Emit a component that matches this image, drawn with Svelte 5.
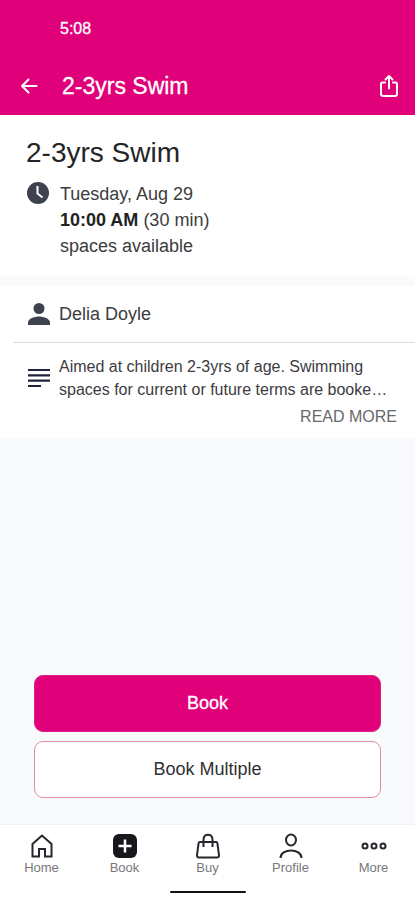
<script lang="ts">
  const session = {
    name: '2-3yrs Swim',
    date: 'Tuesday, Aug 29',
    time: '10:00 AM',
    duration: '(30 min)',
    availability: 'spaces available',
    coach: 'Delia Doyle',
    summary: 'Aimed at children 2-3yrs of age. Swimming spaces for current or future terms are booke…'
  };

  const tabs = [
    { id: 'home', label: 'Home' },
    { id: 'book', label: 'Book' },
    { id: 'buy', label: 'Buy' },
    { id: 'profile', label: 'Profile' },
    { id: 'more', label: 'More' }
  ];

  let activeTab = $state('book');
</script>

<div class="app">
  <header class="header">
    <div class="status-bar">5:08</div>
    <div class="toolbar">
      <button aria-label="Back">
        <svg class="back-icon" width="18" height="18" viewBox="0 0 18 18">
          <path d="M16.5 9H2M8.5 2.5L2 9l6.5 6.5" />
        </svg>
      </button>
      <h1 class="toolbar-title">{session.name}</h1>
      <button aria-label="Share">
        <svg class="share-icon" width="20" height="24" viewBox="0 0 20 24">
          <path d="M6 8.5H3.5Q2 8.5 2 10v10q0 2 2 2h12q2 0 2-2V10q0-1.5-1.5-1.5H14" />
          <path d="M10 14.500V2.500M6.500 5.500L10 2l3.500 3.500" />
        </svg>
      </button>
    </div>
  </header>

  <main class="content">
    <section class="card summary">
      <h2 class="session-title">{session.name}</h2>
      <div class="when">
        <svg class="row-icon" width="24" height="24" viewBox="0 0 24 24">
          <circle cx="12" cy="12" r="11" fill="#3e424f" />
          <path d="M11.5 5v7.500l5 4" fill="none" stroke="#fff" stroke-width="2" />
        </svg>
        <div class="when-text">
          <div>{session.date}</div>
          <div><strong>{session.time}</strong> {session.duration}</div>
          <div>{session.availability}</div>
        </div>
      </div>
    </section>

    <section class="card details">
      <div class="coach">
        <svg class="row-icon" width="24" height="24" viewBox="0 0 24 24">
          <circle cx="12" cy="6.5" r="5.500" fill="#3e424f" />
          <path d="M1 23v-2.500c0-4 7-6 11-6s11 2 11 6V23z" fill="#3e424f" />
        </svg>
        <span>{session.coach}</span>
      </div>
      <div class="about">
        <svg class="row-icon" width="24" height="24" viewBox="0 0 24 24">
          <path d="M1 4h22M1 9.300h22M1 14.600h22M1 20h13" fill="none" stroke="#20243a" stroke-width="2.200" />
        </svg>
        <p>{session.summary}</p>
      </div>
      <button class="read-more">READ MORE</button>
    </section>

    <div class="actions">
      <button class="action primary">Book</button>
      <button class="action">Book Multiple</button>
    </div>
  </main>

  <nav class="tab-bar">
    <div class="tabs">
      {#each tabs as tab}
        <button
          class="tab"
          aria-current={activeTab === tab.id ? 'page' : undefined}
          onclick={() => (activeTab = tab.id)}
        >
          <svg width="26" height="26" viewBox="0 0 26 26">
            {#if tab.id === 'home'}
              <path d="M3.500 11L13 2.500l9.500 8.500V23.500h-6.500V16h-6v7.500H3.500z" />
            {:else if tab.id === 'book'}
              <rect x="1" y="1" width="24" height="24" rx="6" fill="#17181c" stroke="none" />
              <path d="M13 6.500v13M6.500 13h13" stroke="#fff" stroke-width="2.500" />
            {:else if tab.id === 'buy'}
              <path d="M5 9h16q1.200 0 1.400 1.200L24 22q.2 2.500-2 2.500H4q-2.200 0-2-2.500l1.600-11.800Q3.800 9 5 9z" />
              <path d="M8.500 14V6.500c0-6.500 9-6.500 9 0V14" />
            {:else if tab.id === 'profile'}
              <ellipse cx="13" cy="7" rx="5" ry="5.500" />
              <path d="M2.500 25c0-10 21-10 21 0" />
            {:else}
              <circle cx="4" cy="13" r="2.500" />
              <circle cx="13" cy="13" r="2.500" />
              <circle cx="22" cy="13" r="2.500" />
            {/if}
          </svg>
          <span>{tab.label}</span>
        </button>
      {/each}
    </div>
    <div class="home-indicator"></div>
  </nav>
</div>

<style>
  :global(body) {
    margin: 0;
    background: #f8fafc;
  }

  .app {
    display: flex;
    flex-direction: column;
    min-height: 100vh;
    font-family: 'Liberation Sans', Arial, sans-serif;
    font-size: 18px;
    color: #3c3c3e;
    background: #f8fafc;
  }

  button {
    padding: 0;
    border: 0;
    background: none;
    font: inherit;
    color: inherit;
    cursor: pointer;
  }

  h1,
  h2,
  p {
    margin: 0;
    font-weight: 400;
  }

  svg {
    display: block;
  }

  .header {
    background: #e0007a;
    color: #fff;
  }

  .status-bar {
    padding: 17px 60px;
    font-size: 16px;
    line-height: 24px;
    -webkit-text-stroke: 0.3px;
  }

  .toolbar {
    display: flex;
    align-items: center;
    padding: 14px 16px 15px 20px;
  }

  .toolbar-title {
    flex: 1;
    margin-left: 24px;
    font-size: 23px;
    line-height: 28px;
    -webkit-text-stroke: 0.3px;
  }

  .back-icon,
  .share-icon {
    fill: none;
    stroke: #fff;
    stroke-width: 2;
    stroke-linecap: round;
    stroke-linejoin: round;
  }

  .card {
    background: #fff;
  }

  .summary {
    padding: 20px 26px 17px;
    margin-bottom: 10px;
  }

  .session-title {
    font-size: 28px;
    line-height: 36px;
    color: #242426;
  }

  .when {
    display: flex;
    gap: 10px;
    margin-top: 10px;
  }

  .when-text {
    line-height: 26px;
  }

  .when strong {
    color: #222;
  }

  .row-icon {
    flex: none;
  }

  .coach,
  .about {
    display: flex;
    align-items: center;
    gap: 8px;
  }

  .coach {
    margin-left: 13px;
    padding-left: 14px;
    height: 56px;
    border-bottom: 1px solid #dcdce0;
  }

  .about {
    padding: 12px 16px 0 27px;
    font-size: 16px;
    line-height: 23px;
  }

  .read-more {
    display: block;
    margin-left: auto;
    padding: 4px 18px 10px;
    font-size: 16px;
    line-height: 23px;
    color: #68686c;
  }

  .content {
    flex: 1;
    display: flex;
    flex-direction: column;
  }

  .actions {
    display: flex;
    flex-direction: column;
    gap: 9px;
    margin-top: auto;
    padding: 24px 34px 26px;
  }

  .action {
    height: 57px;
    border: 1px solid #e58bad;
    border-radius: 9px;
    background: #fff;
    color: #303032;
  }

  .action.primary {
    border-color: #e0207f;
    background: #e0007a;
    color: #fff;
    -webkit-text-stroke: 0.3px;
  }

  .tab-bar {
    background: #fff;
    border-top: 1px solid #eff1f3;
  }

  .tabs {
    display: flex;
    padding-top: 8px;
  }

  .tab {
    flex: 1;
    display: flex;
    flex-direction: column;
    align-items: center;
    gap: 1px;
    font-size: 13px;
    line-height: 16px;
    color: #77777b;
  }

  .tab svg {
    fill: none;
    stroke: #26262e;
    stroke-width: 2;
  }

  .home-indicator {
    width: 76px;
    height: 2px;
    margin: 15px auto 7px;
    border-radius: 1px;
    background: #111;
  }
</style>
